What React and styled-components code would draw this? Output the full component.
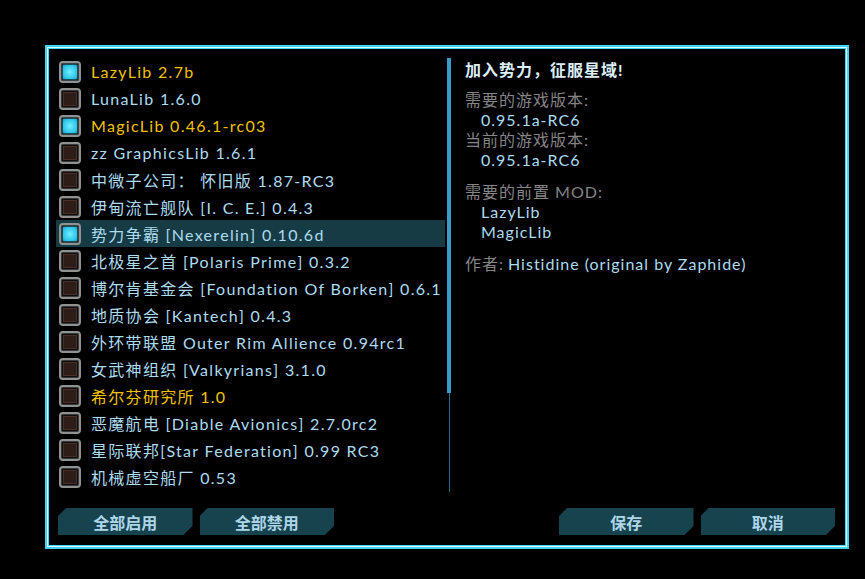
import styled, { createGlobalStyle, css } from "styled-components";

const GlobalStyle = createGlobalStyle`
  html, body {
    margin: 0;
    padding: 0;
    background: #000;
  }
  body {
    font-family: "Lato", "Noto Sans CJK SC", sans-serif;
  }
`;

const Screen = styled.div`
  width: 865px;
  height: 579px;
  background: #000;
  padding: 45px 0 0 45px;
  box-sizing: border-box;
`;

const Frame = styled.div`
  width: 804px;
  height: 504px;
  box-sizing: border-box;
  border: 2px solid #3fd6f6;
  box-shadow: inset 0 0 0 1px #e6fbff, inset 0 0 0 2px #3fd6f6;
  padding: 11px 12px 8px 9px;
  display: flex;
  flex-direction: column;
`;

const Body = styled.div`
  display: flex;
  height: 434px;
`;

const List = styled.div`
  width: 389px;
  height: 434px;
  overflow: hidden;
`;

const Row = styled.div`
  height: 27px;
  display: flex;
  align-items: center;
  gap: 10px;
  padding-left: 3px;
  background: ${(p) => (p.$selected ? "#163b45" : "transparent")};
`;

const Check = styled.div`
  width: 22px;
  height: 22px;
  box-sizing: border-box;
  border-radius: 4px;
  background: #0d0d0d;
  border: 2px solid #8f9291;
  box-shadow: inset 0 0 0 1px #3a3a3a;
  display: flex;
  align-items: center;
  justify-content: center;
  flex-shrink: 0;
`;

const CheckFill = styled.div`
  width: 14px;
  height: 14px;
  ${(p) =>
    p.$on
      ? css`
          background: radial-gradient(circle, #6ff0ff 0%, #2ec6ea 70%, #1a9cc4 100%);
          box-shadow: 0 0 2px #3fd6f6;
        `
      : css`
          background: #2e1c18;
          box-shadow: inset 0 0 0 1px #4a2e28;
        `}
`;

const ModName = styled.span`
  font-size: 16px;
  letter-spacing: 1.3px;
  color: ${(p) => (p.$lib ? "#f2c200" : "#acdcf0")};
  white-space: nowrap;
`;

const Scroll = styled.div`
  width: 4px;
  margin-left: 2px;
  display: flex;
  flex-direction: column;
  align-items: center;
`;

const Thumb = styled.div`
  width: 4px;
  height: 335px;
  background: #389bca;
`;

const Track = styled.div`
  width: 1px;
  flex: 1;
  background: #286b85;
`;

const Detail = styled.div`
  flex: 1;
  padding: 2px 0 0 14px;
  font-size: 16px;
  letter-spacing: 1px;
  display: flex;
  flex-direction: column;
`;

const Title = styled.div`
  color: #dceefa;
  font-weight: 700;
  height: 20px;
  line-height: 20px;
`;

const Label = styled.div`
  color: #858585;
  height: 20px;
  line-height: 20px;
  margin-top: ${(p) => p.$gap || 0}px;
`;

const Value = styled.div`
  color: #acdcf0;
  height: 20px;
  line-height: 20px;
  padding-left: ${(p) => (p.$inline ? 0 : 16)}px;
`;

const Author = styled.div`
  display: flex;
  gap: 4px;
  height: 20px;
  line-height: 20px;
  margin-top: 12px;
`;

const Buttons = styled.div`
  display: flex;
  align-items: center;
  margin-top: 16px;
  padding-left: 2px;
  gap: 7px;
`;

const Button = styled.button`
  width: 135px;
  height: 27px;
  border: none;
  background: #17434f;
  color: #aed6ea;
  font-family: "Noto Sans CJK SC", sans-serif;
  font-size: 16px;
  font-weight: 700;
  padding: 0;
  clip-path: polygon(8px 0, 100% 0, 100% calc(100% - 9px), calc(100% - 9px) 100%, 0 100%, 0 8px);
  margin-left: ${(p) => p.$push || 0}px;
`;

const mods = [
  { name: "LazyLib 2.7b", on: true, lib: true },
  { name: "LunaLib 1.6.0" },
  { name: "MagicLib 0.46.1-rc03", on: true, lib: true },
  { name: "zz GraphicsLib 1.6.1" },
  { name: "中微子公司： 怀旧版 1.87-RC3" },
  { name: "伊甸流亡舰队 [I. C. E.] 0.4.3" },
  { name: "势力争霸 [Nexerelin] 0.10.6d", on: true, selected: true },
  { name: "北极星之首 [Polaris Prime] 0.3.2" },
  { name: "博尔肯基金会 [Foundation Of Borken] 0.6.1" },
  { name: "地质协会 [Kantech] 0.4.3" },
  { name: "外环带联盟  Outer Rim Allience 0.94rc1" },
  { name: "女武神组织 [Valkyrians] 3.1.0" },
  { name: "希尔芬研究所 1.0", lib: true },
  { name: "恶魔航电 [Diable Avionics] 2.7.0rc2" },
  { name: "星际联邦[Star Federation] 0.99 RC3" },
  { name: "机械虚空船厂 0.53" },
  { name: "" },
];

export default function App() {
  return (
    <>
      <GlobalStyle />
      <Screen>
        <Frame>
          <Body>
            <List>
              {mods.map((m, i) => (
                <Row key={i} $selected={m.selected}>
                  <Check>
                    <CheckFill $on={m.on} />
                  </Check>
                  <ModName $lib={m.lib}>{m.name}</ModName>
                </Row>
              ))}
            </List>
            <Scroll>
              <Thumb />
              <Track />
            </Scroll>
            <Detail>
              <Title>加入势力，征服星域!</Title>
              <Label $gap={10}>需要的游戏版本:</Label>
              <Value>0.95.1a-RC6</Value>
              <Label>当前的游戏版本:</Label>
              <Value>0.95.1a-RC6</Value>
              <Label $gap={12}>需要的前置 MOD:</Label>
              <Value>LazyLib</Value>
              <Value>MagicLib</Value>
              <Author>
                <Label>作者:</Label>
                <Value $inline>Histidine (original by Zaphide)</Value>
              </Author>
            </Detail>
          </Body>
          <Buttons>
            <Button>全部启用</Button>
            <Button>全部禁用</Button>
            <Button $push={218}>保存</Button>
            <Button>取消</Button>
          </Buttons>
        </Frame>
      </Screen>
    </>
  );
}
